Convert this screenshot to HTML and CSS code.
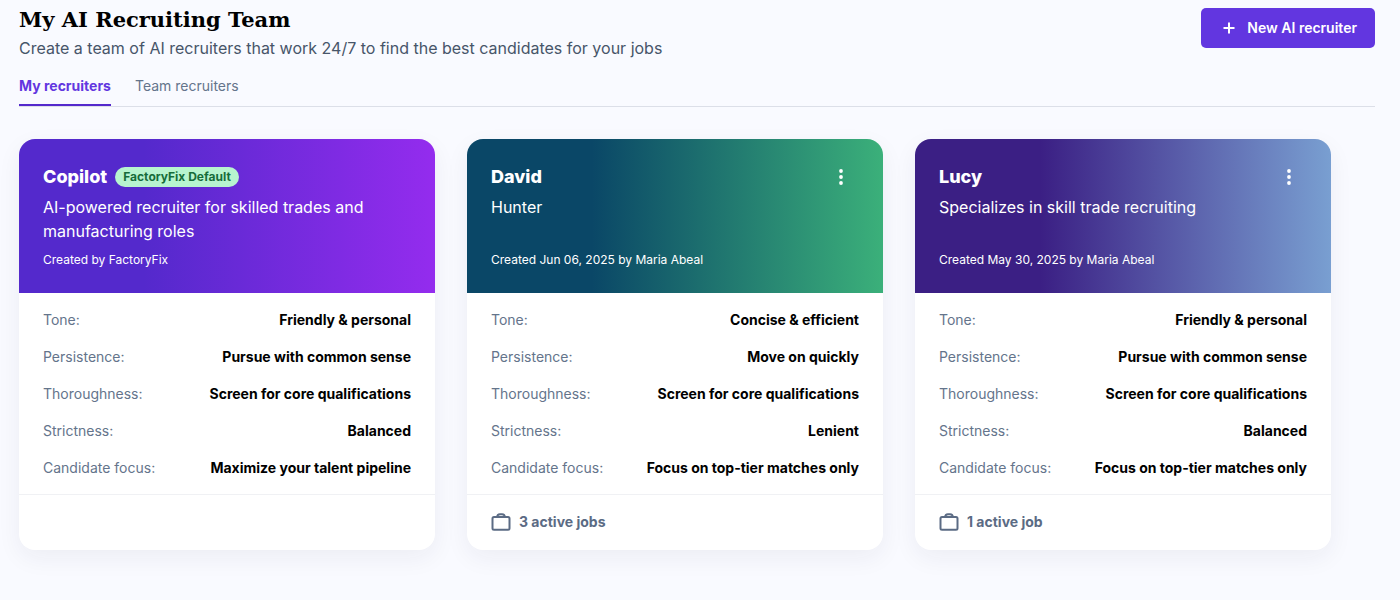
FILE: index.html
```html
<!DOCTYPE html>
<html lang="en">
<head>
<meta charset="utf-8">
<meta name="viewport" content="width=device-width, initial-scale=1">
<title>My AI Recruiting Team</title>
<link rel="stylesheet" href="styles.css">
</head>
<body>
<main class="page">
  <header class="page-header">
    <div class="heading">
      <h1 class="title">My AI Recruiting Team</h1>
      <p class="subtitle">Create a team of AI recruiters that work 24/7 to find the best candidates for your jobs</p>
    </div>
    <button class="new-button" type="button">
      <svg class="plus" viewBox="0 0 12 12" aria-hidden="true"><path d="M6 .5v11M.5 6h11"/></svg>
      New AI recruiter
    </button>
  </header>
  <nav class="tabs" aria-label="Recruiters">
    <a class="tab tab-active" href="#mine" aria-current="page">My recruiters</a>
    <a class="tab" href="#team">Team recruiters</a>
  </nav>
  <section class="cards">
    <article class="card">
      <div class="banner banner-copilot">
        <div class="name-row">
          <h2 class="name">Copilot</h2>
          <span class="badge">FactoryFix Default</span>
        </div>
        <p class="description">AI-powered recruiter for skilled trades and manufacturing roles</p>
        <p class="created">Created by FactoryFix</p>
      </div>
      <dl class="traits">
        <div class="trait"><dt>Tone:</dt><dd>Friendly &amp; personal</dd></div>
        <div class="trait"><dt>Persistence:</dt><dd>Pursue with common sense</dd></div>
        <div class="trait"><dt>Thoroughness:</dt><dd>Screen for core qualifications</dd></div>
        <div class="trait"><dt>Strictness:</dt><dd>Balanced</dd></div>
        <div class="trait"><dt>Candidate focus:</dt><dd>Maximize your talent pipeline</dd></div>
      </dl>
      <div class="card-footer"></div>
    </article>
    <article class="card">
      <div class="banner banner-david">
        <div class="name-row">
          <h2 class="name">David</h2>
          <button class="menu-button" type="button" aria-label="Options for David">
            <svg class="dots" viewBox="0 0 4 16" aria-hidden="true"><circle cx="2" cy="2" r="1.900"/><circle cx="2" cy="8" r="1.900"/><circle cx="2" cy="14" r="1.900"/></svg>
          </button>
        </div>
        <p class="description">Hunter</p>
        <p class="created">Created Jun 06, 2025 by Maria Abeal</p>
      </div>
      <dl class="traits">
        <div class="trait"><dt>Tone:</dt><dd>Concise &amp; efficient</dd></div>
        <div class="trait"><dt>Persistence:</dt><dd>Move on quickly</dd></div>
        <div class="trait"><dt>Thoroughness:</dt><dd>Screen for core qualifications</dd></div>
        <div class="trait"><dt>Strictness:</dt><dd>Lenient</dd></div>
        <div class="trait"><dt>Candidate focus:</dt><dd>Focus on top-tier matches only</dd></div>
      </dl>
      <div class="card-footer">
        <svg class="briefcase" viewBox="0 0 20 20" aria-hidden="true"><rect x="1.5" y="5" width="17" height="12.800" rx="1.500"/><path d="M6.200 5C6.200 3 7.400 2.200 9 2.200h2c1.600 0 2.800.800 2.800 2.800"/></svg>
        <span>3 active jobs</span>
      </div>
    </article>
    <article class="card">
      <div class="banner banner-lucy">
        <div class="name-row">
          <h2 class="name">Lucy</h2>
          <button class="menu-button" type="button" aria-label="Options for Lucy">
            <svg class="dots" viewBox="0 0 4 16" aria-hidden="true"><circle cx="2" cy="2" r="1.900"/><circle cx="2" cy="8" r="1.900"/><circle cx="2" cy="14" r="1.900"/></svg>
          </button>
        </div>
        <p class="description">Specializes in skill trade recruiting</p>
        <p class="created">Created May 30, 2025 by Maria Abeal</p>
      </div>
      <dl class="traits">
        <div class="trait"><dt>Tone:</dt><dd>Friendly &amp; personal</dd></div>
        <div class="trait"><dt>Persistence:</dt><dd>Pursue with common sense</dd></div>
        <div class="trait"><dt>Thoroughness:</dt><dd>Screen for core qualifications</dd></div>
        <div class="trait"><dt>Strictness:</dt><dd>Balanced</dd></div>
        <div class="trait"><dt>Candidate focus:</dt><dd>Focus on top-tier matches only</dd></div>
      </dl>
      <div class="card-footer">
        <svg class="briefcase" viewBox="0 0 20 20" aria-hidden="true"><rect x="1.5" y="5" width="17" height="12.800" rx="1.500"/><path d="M6.200 5C6.200 3 7.400 2.200 9 2.200h2c1.600 0 2.800.800 2.800 2.800"/></svg>
        <span>1 active job</span>
      </div>
    </article>
  </section>
</main>
</body>
</html>
```
FILE: styles.css
```css
* { box-sizing: border-box; }

body {
  margin: 0;
  background: #f9faff;
  color: #000;
  font-family: Inter, "Liberation Sans", sans-serif;
  font-size: 14px;
  line-height: 21px;
}

h1, h2, p, dl, dd { margin: 0; }

.page { padding: 8px 25px 48px 19px; }

.page-header {
  display: flex;
  justify-content: space-between;
  align-items: flex-start;
  gap: 24px;
}

.title {
  font-family: "Museo Slab", "DejaVu Serif", serif;
  font-size: 21px;
  font-weight: 700;
  line-height: 24px;
}

.subtitle {
  margin-top: 4px;
  color: #475569;
  font-size: 16px;
  line-height: 24px;
}

.new-button {
  display: flex;
  align-items: center;
  gap: 12px;
  height: 40px;
  padding: 0 18px 0 22px;
  border: 0;
  border-radius: 5px;
  background: #6236e0;
  color: #fff;
  font: inherit;
  font-weight: 600;
  line-height: 20px;
  white-space: nowrap;
}

.plus {
  width: 12px;
  height: 12px;
  fill: none;
  stroke: currentColor;
  stroke-width: 2;
}

.tabs {
  display: flex;
  gap: 24px;
  margin-top: 8px;
  border-bottom: 1px solid #dcdfe8;
}

.tab {
  padding: 7px 0 8px;
  border-bottom: 2px solid transparent;
  color: #64748b;
  text-decoration: none;
}

.tab-active {
  border-color: #5429cc;
  color: #6236e0;
  font-weight: 700;
}

.cards {
  display: grid;
  grid-template-columns: repeat(3, minmax(0, 416px));
  gap: 32px;
  margin-top: 32px;
}

.card {
  overflow: hidden;
  border-radius: 16px;
  background: #fff;
  box-shadow: 0 8px 24px rgba(30, 30, 70, 0.06);
}

.banner {
  display: flex;
  flex-direction: column;
  padding: 24px;
  color: #fff;
}

.banner-copilot { background: linear-gradient(90deg, #5429cc 30%, #942cee); }
.banner-david { background: linear-gradient(90deg, #0a4767 30%, #3bb07a); }
.banner-lucy { background: linear-gradient(90deg, #3b1f84 30%, #799fd1); }

.name-row {
  display: flex;
  align-items: center;
  gap: 8px;
  height: 28px;
}

.name {
  font-size: 18px;
  font-weight: 800;
  line-height: 28px;
}

.badge {
  padding: 0 8px;
  border-radius: 10px;
  background: #b7f4cf;
  color: #166c3a;
  font-size: 12px;
  font-weight: 700;
  line-height: 20px;
}

.menu-button {
  display: flex;
  align-items: center;
  justify-content: center;
  width: 36px;
  height: 28px;
  margin-left: auto;
  padding: 0;
  border: 0;
  background: none;
  color: #fff;
}

.dots {
  width: 4px;
  height: 16px;
  fill: currentColor;
}

.description {
  min-height: 48px;
  margin-top: 4px;
  font-size: 16px;
  line-height: 24px;
}

.created {
  margin-top: 8px;
  font-size: 12px;
  line-height: 18px;
}

.traits {
  display: flex;
  flex-direction: column;
  gap: 16px;
  padding: 16px 24px;
}

.trait {
  display: flex;
  justify-content: space-between;
  gap: 16px;
}

.trait dt { color: #64748b; }

.trait dd {
  font-weight: 700;
  text-align: right;
}

.card-footer {
  display: flex;
  align-items: center;
  gap: 8px;
  min-height: 56px;
  padding: 17px 24px 18px;
  border-top: 1px solid #f0f1f4;
  color: #5b6b84;
  font-weight: 700;
  line-height: 20px;
}

.briefcase {
  width: 20px;
  height: 20px;
  fill: none;
  stroke: currentColor;
  stroke-width: 2;
}
```
